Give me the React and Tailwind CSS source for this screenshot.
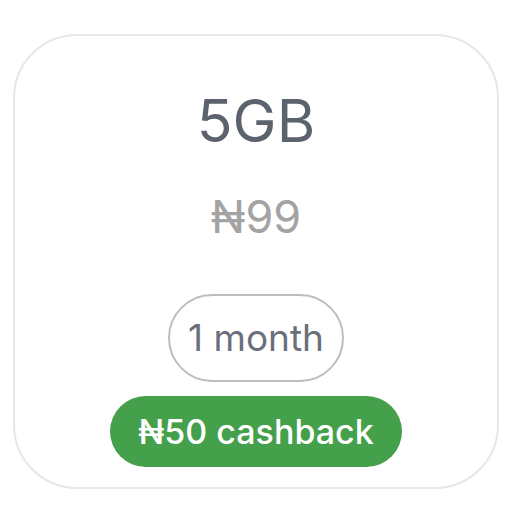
import React from 'react';

function PlanCard() {
  return (
    <div className="w-[486px] h-[455px] rounded-[64px] border-2 border-[#e6e7eb] bg-white flex flex-col items-center">
      <div className="mt-[55px] text-[59px] leading-none text-[#5c636e]">5GB</div>
      <div className="mt-[44px] text-[45px] leading-none text-[#a3a3a3]">₦99</div>
      <div className="mt-[55px] h-[88px] px-[18px] rounded-full border-2 border-[#bdbdbd] flex items-center text-[37px] text-[#6b6f7b]">
        1 month
      </div>
      <div className="mt-[14px] h-[71px] px-[28px] rounded-full bg-[#45a04b] flex items-center text-[34px] font-medium text-white">
        ₦50 cashback
      </div>
    </div>
  );
}

export default function App() {
  return (
    <div className="w-[516px] h-[517px] bg-white pt-[34px] pl-[13px]" style={{ fontFamily: 'Inter, "Noto Sans", sans-serif' }}>
      <PlanCard />
    </div>
  );
}
